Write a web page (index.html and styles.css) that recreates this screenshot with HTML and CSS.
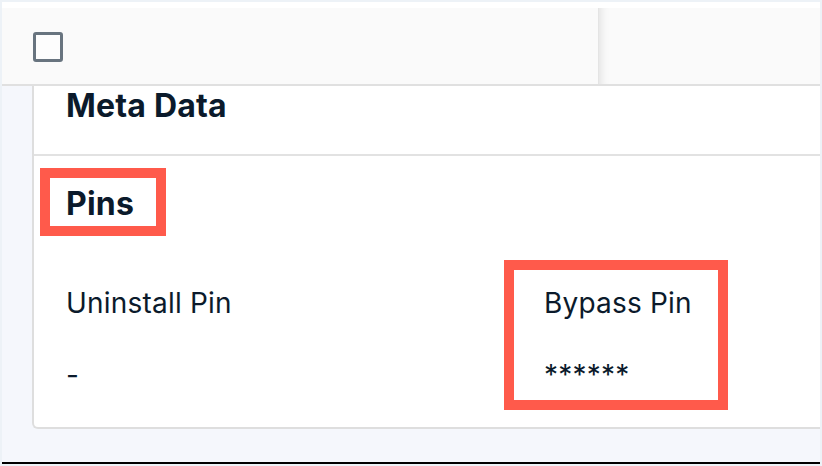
FILE: index.html
```html
<!DOCTYPE html>
<html>
<head>
<meta charset="utf-8">
<link rel="stylesheet" href="styles.css">
</head>
<body>
<div class="frame">
  <div class="panel">
    <div class="top">
      <div class="header">
        <div class="hcell first"><span class="checkbox"></span></div>
        <div class="hcell rest"></div>
      </div>
    </div>
    <div class="body">
      <div class="card">
        <div class="section meta">
          <h2 class="title">Meta Data</h2>
        </div>
        <div class="section pins">
          <h3 class="title pins-title">Pins</h3>
          <div class="grid">
            <div class="field">
              <div class="label">Uninstall Pin</div>
              <div class="value">-</div>
            </div>
            <div class="field">
              <div class="label">Bypass Pin</div>
              <div class="value">******</div>
            </div>
          </div>
          <div class="mark mark-pins"></div>
          <div class="mark mark-bypass"></div>
        </div>
      </div>
    </div>
    <div class="scrollbar"></div>
  </div>
</div>
</body>
</html>
```
FILE: styles.css
```css
* { box-sizing: border-box; }
html, body { margin: 0; padding: 0; }
body {
  width: 822px;
  height: 466px;
  overflow: hidden;
  background: #edf2f7;
  font-family: Inter, "Noto Sans", sans-serif;
  color: #0b1a2b;
}
.frame {
  height: 466px;
  padding: 2px 2px 2px 2px;
}
.panel {
  height: 100%;
  background: #f5f7fc;
  display: flex;
  flex-direction: column;
}
.top {
  background: #ffffff;
  padding-top: 6px;
}
.header {
  display: flex;
  height: 78px;
  background: #fafafa;
  border-bottom: 2px solid #e0e0e0;
}
.hcell.first {
  width: 597px;
  border-right: 1px solid #e4e4e4;
  display: flex;
  align-items: center;
  padding-left: 31px;
  padding-top: 2px;
}
.hcell.rest {
  flex: 1;
  box-shadow: inset 10px 0 8px -8px rgba(0,0,0,0.10);
}
.checkbox {
  width: 30px;
  height: 30px;
  border: 3px solid #68747f;
  border-radius: 3px;
  background: #fdfdfd;
}
.body {
  padding-left: 30px;
  display: flex;
}
.card {
  flex: 1;
  background: #ffffff;
  border-left: 2px solid #dedede;
  border-bottom: 2px solid #dedede;
  border-bottom-left-radius: 6px;
}
.section {
  padding-left: 32px;
}
.meta {
  height: 70px;
  border-bottom: 2px solid #e2e2e2;
}
.title {
  margin: 0;
  font-size: 32px;
  line-height: 40px;
  font-weight: 700;
  letter-spacing: 0.2px;
}
.pins {
  position: relative;
  padding-top: 28px;
  padding-bottom: 34px;
}
.grid {
  display: grid;
  grid-template-columns: 478px 1fr;
  margin-top: 61px;
}
.label, .value {
  font-size: 28px;
  line-height: 36px;
  letter-spacing: 0.2px;
}
.value {
  margin-top: 36px;
}
.mark {
  position: absolute;
  border: 10px solid #ff5a4b;
}
.mark-pins {
  left: 6px;
  top: 12px;
  width: 126px;
  height: 68px;
}
.mark-bypass {
  left: 470px;
  top: 104px;
  width: 224px;
  height: 150px;
}
.scrollbar {
  margin-top: auto;
  height: 2px;
  background: #000000;
}
```
